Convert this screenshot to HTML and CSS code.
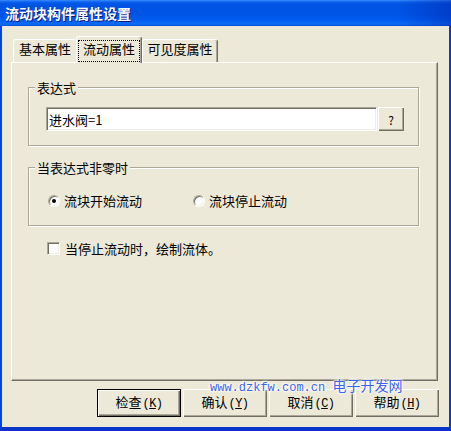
FILE: index.html
```html
<!DOCTYPE html>
<html lang="zh-CN">
<head>
<meta charset="utf-8">
<title>流动块构件属性设置</title>
<link rel="stylesheet" href="styles.css">
</head>
<body>
<div class="window">
  <div class="titlebar"><span class="title">流动块构件属性设置</span></div>
  <div class="frame">
    <div class="tabs">
      <div class="tab tab-basic">基本属性</div>
      <div class="tab tab-active"><span class="focus">流动属性</span></div>
      <div class="tab tab-vis">可见度属性</div>
    </div>
    <div class="panel">
      <fieldset class="group group-expr">
        <legend>表达式</legend>
        <div class="group-body expr-body">
          <div class="textbox">进水阀=1</div>
          <button class="btn btn-q">?</button>
        </div>
      </fieldset>
      <fieldset class="group group-nz">
        <legend>当表达式非零时</legend>
        <div class="group-body radio-body">
          <div class="radio-item first"><span class="radio checked"></span>流块开始流动</div>
          <div class="radio-item"><span class="radio"></span>流块停止流动</div>
        </div>
      </fieldset>
      <div class="check-row"><span class="checkbox"></span>当停止流动时，绘制流体。</div>
    </div>
    <div class="buttons">
      <button class="btn btn-dlg btn-default">检查<span class="key">(<u>K</u>)</span></button>
      <button class="btn btn-dlg">确认<span class="key">(<u>Y</u>)</span></button>
      <button class="btn btn-dlg">取消<span class="key">(<u>C</u>)</span></button>
      <button class="btn btn-dlg">帮助<span class="key">(<u>H</u>)</span></button>
    </div>
  </div>
  <div class="watermark">www.dzkfw.com.cn <span class="wm-cn">电子开发网</span></div>
</div>
</body>
</html>
```

FILE: styles.css
```css
html, body {
  margin: 0;
  padding: 0;
  background: #ece9d8;
}
body {
  font-family: "Noto Sans CJK SC", sans-serif;
  font-size: 13px;
  color: #000;
}
.window {
  position: relative;
  width: 451px;
  height: 431px;
  display: flex;
  flex-direction: column;
}
.titlebar {
  flex: none;
  height: 26px;
  box-sizing: border-box;
  padding-left: 5px;
  display: flex;
  align-items: center;
  background:
    linear-gradient(to right, rgba(0,0,0,0) 88%, rgba(0,20,150,0.35) 100%),
    linear-gradient(to bottom, #3a8cff 0px, #0a62ee 2px, #0054e3 4px, #0054e6 14px, #005cf0 20px, #0a6af5 23px, #0a66f2 25px, #0041cc 26px);
  color: #fff;
  font-weight: bold;
  font-size: 14px;
  line-height: 16px;
  text-shadow: 1px 1px #0a1883;
}
.frame {
  flex: 1;
  display: flex;
  flex-direction: column;
  background: #ece9d8;
  border-left: 2px solid #0842d8;
  border-right: 2px solid #0838d0;
  border-bottom: 4px solid #0834c8;
}
.tabs {
  margin-top: 10px;
  height: 26px;
  padding-left: 11px;
  display: flex;
  align-items: flex-end;
}
.tab {
  box-sizing: border-box;
  height: 23px;
  border-top: 1px solid #fff;
  border-left: 1px solid #fff;
  border-right: 1px solid #716f64;
  box-shadow: inset -1px 0 #aca899;
  border-radius: 3px 3px 0 0;
  padding-top: 2px;
  line-height: 13px;
  text-align: center;
  white-space: nowrap;
  background: #ece9d8;
}
.tab-basic {
  width: 63px;
  border-right: 0;
  box-shadow: none;
}
.tab-active {
  width: 66px;
  height: 27px;
  margin-bottom: -1px;
  padding: 3px 1px 1px 1px;
  position: relative;
  z-index: 1;
}
.focus {
  display: block;
  box-sizing: border-box;
  height: 22px;
  border: 1px dotted #000;
  line-height: 13px;
  padding-top: 1px;
}
.tab-vis {
  width: 76px;
}
.panel {
  box-sizing: border-box;
  margin-left: 9px;
  width: 427px;
  height: 319px;
  border: 1px solid;
  border-color: #fff #716f64 #716f64 #fff;
  box-shadow: inset -1px -1px #aca899;
  padding: 18px 18px 0 16px;
  background: #ece9d8;
}
.group {
  box-sizing: border-box;
  width: 391px;
  margin: 0;
  padding: 0;
  min-inline-size: 0;
  border: 1px solid #aca899;
  box-shadow: inset 1px 1px #fff, 1px 1px #fff;
}
.group legend {
  margin-left: 6px;
  padding: 0 2px;
  line-height: 13px;
  background: #ece9d8;
}
.expr-body {
  display: flex;
  align-items: center;
  padding: 13px 14px 14px 17px;
}
.textbox {
  box-sizing: border-box;
  width: 331px;
  height: 24px;
  display: flex;
  align-items: center;
  padding-left: 2px;
  background: #fff;
  border: 1px solid;
  border-color: #aca899 #fff #fff #aca899;
  box-shadow: inset 1px 1px #716f64, inset -1px -1px #f1efe2;
  line-height: 13px;
}
.btn {
  font: inherit;
  color: #000;
  box-sizing: border-box;
  margin: 0;
  padding: 0;
  border: 0;
  background: #ece9d8;
  box-shadow: inset 1px 1px #fff, inset -1px -1px #716f64, inset -2px -2px #aca899;
  line-height: 13px;
  white-space: nowrap;
}
.btn-q {
  width: 26px;
  height: 24px;
  margin-left: 1px;
  font-size: 12px;
}
.group-nz {
  margin-top: 15px;
}
.radio-body {
  display: flex;
  align-items: center;
  padding: 20px 14px 18px 19px;
  height: 13px;
  box-sizing: content-box;
}
.radio-item {
  display: flex;
  align-items: center;
  gap: 4px;
  line-height: 13px;
  white-space: nowrap;
}
.radio-item.first {
  width: 145px;
}
.radio {
  flex: none;
  box-sizing: border-box;
  width: 12px;
  height: 12px;
  border-radius: 50%;
  border: 1px solid;
  border-color: #aca899 #fff #fff #aca899;
  box-shadow: inset 1px 1px #716f64, inset -1px -1px #f1efe2;
  background: #fff;
  display: flex;
  align-items: center;
  justify-content: center;
}
.radio.checked::after {
  content: "";
  width: 4px;
  height: 4px;
  border-radius: 50%;
  background: #000;
}
.check-row {
  margin-top: 16px;
  padding-left: 19px;
  display: flex;
  align-items: center;
  gap: 5px;
  line-height: 13px;
  white-space: nowrap;
}
.checkbox {
  flex: none;
  box-sizing: border-box;
  width: 13px;
  height: 13px;
  border: 1px solid;
  border-color: #aca899 #fff #fff #aca899;
  box-shadow: inset 1px 1px #716f64, inset -1px -1px #f1efe2;
  background: #fff;
}
.buttons {
  margin-top: 8px;
  display: flex;
  justify-content: flex-end;
  gap: 2px;
  padding-right: 10px;
}
.btn-dlg {
  width: 84px;
  height: 28px;
}
.btn-default {
  border: 1px solid #000;
}
.key {
  font-family: "Liberation Mono", monospace;
  font-size: 12px;
  letter-spacing: -0.6px;
  margin-left: 1px;
}
.btn u {
  text-decoration: underline;
  text-underline-offset: 1px;
}
.watermark {
  position: absolute;
  left: 210px;
  top: 377px;
  white-space: nowrap;
  color: #3d63e6;
  font-family: "Liberation Mono", monospace;
  font-size: 12px;
  line-height: 16px;
  text-shadow: 0 0 2px #fff, 0 0 2px #fff, 0 0 3px #fff, 0 0 4px #fff;
}
.wm-cn {
  font-family: "Noto Sans CJK SC", sans-serif;
  font-size: 14px;
}
```
